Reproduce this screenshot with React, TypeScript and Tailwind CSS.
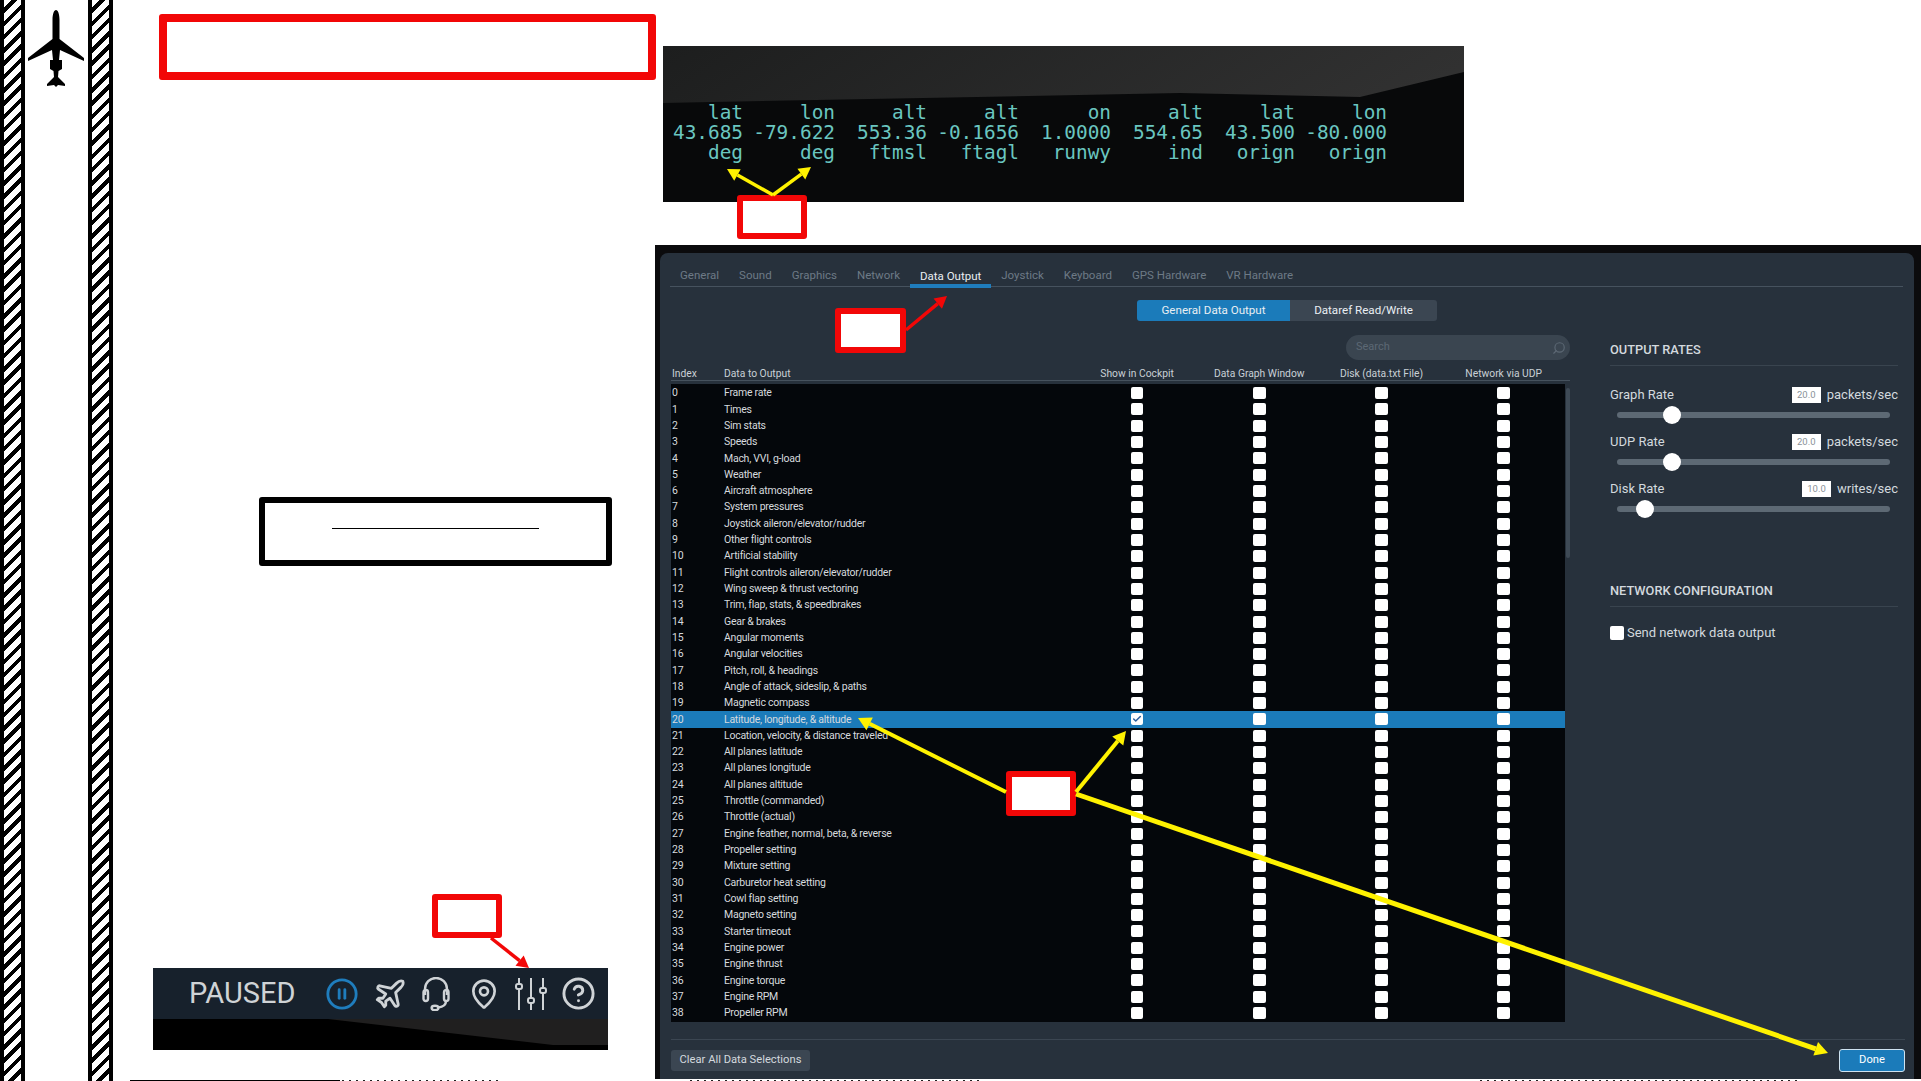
import React from "react";
import { Check, CircleHelp, CirclePause, MapPin, Plane, Search } from "lucide-react";

const DATA_ROWS = [
  "Frame rate",
  "Times",
  "Sim stats",
  "Speeds",
  "Mach, VVI, g-load",
  "Weather",
  "Aircraft atmosphere",
  "System pressures",
  "Joystick aileron/elevator/rudder",
  "Other flight controls",
  "Artificial stability",
  "Flight controls aileron/elevator/rudder",
  "Wing sweep & thrust vectoring",
  "Trim, flap, stats, & speedbrakes",
  "Gear & brakes",
  "Angular moments",
  "Angular velocities",
  "Pitch, roll, & headings",
  "Angle of attack, sideslip, & paths",
  "Magnetic compass",
  "Latitude, longitude, & altitude",
  "Location, velocity, & distance traveled",
  "All planes latitude",
  "All planes longitude",
  "All planes altitude",
  "Throttle (commanded)",
  "Throttle (actual)",
  "Engine feather, normal, beta, & reverse",
  "Propeller setting",
  "Mixture setting",
  "Carburetor heat setting",
  "Cowl flap setting",
  "Magneto setting",
  "Starter timeout",
  "Engine power",
  "Engine thrust",
  "Engine torque",
  "Engine RPM",
  "Propeller RPM",
];

const TABS = ["General", "Sound", "Graphics", "Network", "Data Output", "Joystick", "Keyboard", "GPS Hardware", "VR Hardware"];

const READOUT = [
  ["lat", "lon", "alt", "alt", "on", "alt", "lat", "lon"],
  ["43.685", "-79.622", "553.36", "-0.1656", "1.0000", "554.65", "43.500", "-80.000"],
  ["deg", "deg", "ftmsl", "ftagl", "runwy", "ind", "orign", "orign"],
];

const RATES = [
  { label: "Graph Rate", value: "20.0", unit: "packets/sec", thumb: 55 },
  { label: "UDP Rate", value: "20.0", unit: "packets/sec", thumb: 55 },
  { label: "Disk Rate", value: "10.0", unit: "writes/sec", thumb: 27.5 },
];

const YELLOW = "#fff200";
const RED = "#f20707";

const ROW_GRID = "grid grid-cols-[53px_352px_122.2px_122.2px_122.2px_122.2px] items-center";

// line with a filled head, coordinates are page pixels
function Arrow({ x1, y1, x2, y2, color, width = 4, head = 13 }: { x1: number; y1: number; x2: number; y2: number; color: string; width?: number; head?: number }) {
  const a = Math.atan2(y2 - y1, x2 - x1);
  const bx = x2 - Math.cos(a) * head;
  const by = y2 - Math.sin(a) * head;
  const nx = -Math.sin(a) * head * 0.55;
  const ny = Math.cos(a) * head * 0.55;
  return (
    <g>
      <line x1={x1} y1={y1} x2={bx} y2={by} stroke={color} strokeWidth={width} />
      <polygon points={`${x2},${y2} ${bx + nx},${by + ny} ${bx - nx},${by - ny}`} fill={color} />
    </g>
  );
}

function HatchStrip({ className }: { className: string }) {
  return (
    <div
      className={`absolute top-0 h-[1081px] w-[25px] border-x-[4px] border-black bg-[repeating-linear-gradient(135deg,#fff_0px,#fff_5.5px,#000_5.5px,#000_9.4px)] ${className}`}
    />
  );
}

function Box({ className }: { className: string }) {
  return <div className={`absolute rounded-[3px] bg-white ${className}`} />;
}

function Tick({ checked }: { checked?: boolean }) {
  return (
    <div className="mx-auto flex h-[12px] w-[12.5px] items-center justify-center rounded-[2px] bg-white">
      {checked && <Check size={10} strokeWidth={3.5} className="text-[#2b5f9e]" />}
    </div>
  );
}

function SlidersIcon() {
  return (
    <svg width="32" height="34" viewBox="0 0 32 34" fill="none" stroke="#cfd3d6" strokeWidth="2">
      <path d="M4 1v32M16 1v32M28 1v32" />
      <rect x="1" y="7" width="6" height="5" rx="2" fill="#17212c" />
      <rect x="13" y="21" width="6" height="5" rx="2" fill="#17212c" />
      <rect x="25" y="11" width="6" height="5" rx="2" fill="#17212c" />
    </svg>
  );
}

function HeadsetIcon() {
  return (
    <svg width="28" height="34" viewBox="0 0 28 34" fill="none" stroke="#cfd3d6" strokeWidth="2.4">
      <path d="M3 18v-6a11 11 0 0 1 22 0v6" />
      <rect x="1.5" y="13" width="4.5" height="11" rx="2.2" />
      <rect x="22" y="13" width="4.5" height="11" rx="2.2" />
      <path d="M24 24c0 4-3 6-8 6.5" />
      <ellipse cx="13" cy="31" rx="3.4" ry="2.2" />
    </svg>
  );
}

function PausedBar() {
  return (
    <div className="absolute left-[153px] top-[968px] h-[82px] w-[455px] bg-black">
      <div className="flex h-[51px] items-center bg-[#17212c] pl-[36px] text-[#cfd3d6]">
        <span className="w-[136px] font-['Roboto',sans-serif] text-[29px]">PAUSED</span>
        <CirclePause size={34} strokeWidth={2} className="mr-[14px] text-[#1f7dbd]" />
        <Plane size={34} strokeWidth={2} className="mr-[15px]" />
        <div className="mr-[18px]"><HeadsetIcon /></div>
        <MapPin size={32} strokeWidth={2} className="mr-[14.5px]" />
        <div className="mr-[14px]"><SlidersIcon /></div>
        <CircleHelp size={35} strokeWidth={2} />
      </div>
      <svg className="block h-[31px] w-full" viewBox="0 0 455 31" preserveAspectRatio="none">
        <polygon points="175,0 455,0 455,26 400,26" fill="#201f1f" />
      </svg>
    </div>
  );
}

function SimReadout() {
  return (
    <div className="absolute left-[663px] top-[46px] h-[156px] w-[801px] overflow-hidden bg-[#262626]">
      <svg className="absolute inset-0 h-full w-full" viewBox="0 0 801 156">
        <defs>
          <linearGradient id="sky" x1="0" y1="0" x2="1" y2="0.3">
            <stop offset="0" stopColor="#1d1e1e" />
            <stop offset="1" stopColor="#323232" />
          </linearGradient>
        </defs>
        <rect width="801" height="156" fill="url(#sky)" />
        <polygon points="0,57 517,47 697,51 801,26 801,156 0,156" fill="#08090a" />
      </svg>
      <div className="relative grid grid-cols-[80px_repeat(7,92px)] pt-[57px] font-['DejaVu_Sans_Mono',monospace] text-[19.4px] leading-[20px] text-[#6ac6c0]">
        {READOUT.flat().map((cell, i) => (
          <span key={i} className="whitespace-nowrap text-right">
            {cell}
          </span>
        ))}
      </div>
    </div>
  );
}

function DataOutputDialog() {
  return (
    <div className="absolute left-[655px] top-[245px] h-[834px] w-[1266px] bg-[#0b0b0d] pl-[5px] pr-[7px] pt-[8px] font-['Roboto',sans-serif]">
      <div className="flex h-full flex-col rounded-t-lg bg-[#27313c]">
        {/* Tabs */}
        <div className="ml-[10px] mr-[11px] flex h-[34px] items-end border-b border-[#46525e] text-[11.5px] text-[#6d7a86]">
          {TABS.map((tab) => (
            <div
              key={tab}
              className={
                tab === "Data Output"
                  ? "mb-[-2px] flex h-[30px] items-center border-b-[4px] border-[#1f7dbd] px-[10px] pt-[12px] text-[#e9eef2]"
                  : "flex h-[30px] items-center px-[10px] pt-[10px]"
              }
            >
              {tab}
            </div>
          ))}
        </div>

        {/* General / dataref switch */}
        <div className="mt-[13px] flex justify-center text-[11.6px] text-[#e9eef2]">
          <div className="flex h-[21px] w-[153px] items-center justify-center rounded-l-[3px] bg-[#1b7bba]">General Data Output</div>
          <div className="flex h-[21px] w-[147px] items-center justify-center rounded-r-[3px] bg-[#3b4652]">Dataref Read/Write</div>
        </div>

        <div className="flex flex-1 pl-[11px] pt-[13px]">
          {/* Data table */}
          <div className="w-[899px]">
            <div className="mt-px flex h-[25px] justify-end">
              <div className="flex w-[224px] items-center justify-between rounded-full bg-[#3a4550] pl-[10px] pr-[4px] text-[11px] text-[#5c6874]">
                <span>Search</span>
                <Search size={14} className="-scale-x-100" />
              </div>
            </div>
            <div className={`${ROW_GRID} h-[21px] w-[899px] border-b border-[#46525e] pt-[6px] text-[10.3px] text-[#c9d0d6]`}>
              <span className="pl-[1px]">Index</span>
              <span>Data to Output</span>
              <span className="text-center">Show in Cockpit</span>
              <span className="text-center">Data Graph Window</span>
              <span className="text-center">Disk (data.txt File)</span>
              <span className="text-center">Network via UDP</span>
            </div>
            <div className="mt-[3px] flex h-[638px]">
              <div className="w-[894px] bg-[#04070b] pt-px text-[10.5px] tracking-[-0.25px] text-[#d6dade]">
                {DATA_ROWS.map((name, i) => (
                  <div key={name} className={`${ROW_GRID} h-[16.32px] ${i === 20 ? "bg-[#1b7bba]" : ""}`}>
                    <span className="pl-[1px]">{i}</span>
                    <span className="whitespace-nowrap">{name}</span>
                    <Tick checked={i === 20} />
                    <Tick />
                    <Tick />
                    <Tick />
                  </div>
                ))}
              </div>
              <div className="ml-px mt-[4px] h-[170px] w-[4px] rounded-full bg-[#3e4a56]" />
            </div>
          </div>

          {/* Right hand settings */}
          <div className="ml-[40px] w-[288px] text-[#d3d9de]">
            <div className="flex h-[32px] items-center border-b border-[#39444f] text-[12.8px] font-medium">OUTPUT RATES</div>
            <div className="mt-[21px] flex flex-col gap-[10px]">
              {RATES.map((rate) => (
                <div key={rate.label}>
                  <div className="flex h-[16px] items-center text-[13px]">
                    <span className="flex-1">{rate.label}</span>
                    <span className="mr-[6px] flex h-[16px] w-[29px] items-center justify-center bg-white text-[9.5px] text-[#8a9299]">{rate.value}</span>
                    <span>{rate.unit}</span>
                  </div>
                  <div className="mx-[7px] mt-[3px] flex h-[18px] items-center">
                    <div className="relative h-[6px] w-[273px] rounded-full bg-[#5d6974]">
                      <div
                        className="absolute top-[-6px] h-[18px] w-[18px] -translate-x-1/2 rounded-full bg-white"
                        style={{ left: rate.thumb }}
                      />
                    </div>
                  </div>
                </div>
              ))}
            </div>
            <div className="mt-[57px] flex h-[32px] items-center border-b border-[#39444f] text-[12.8px] font-medium">NETWORK CONFIGURATION</div>
            <div className="mt-[16px] flex items-center gap-[3px] text-[13px]">
              <div className="h-[14px] w-[14px] rounded-[2px] bg-white" />
              <span>Send network data output</span>
            </div>
          </div>
        </div>

        {/* Footer */}
        <div className="ml-[11px] mr-[9px] flex h-[40px] items-start justify-between border-t border-[#3b4652] pt-[10px] text-[11.2px] text-[#d3d9de]">
          <div className="flex h-[21px] w-[139px] items-center justify-center rounded-[3px] bg-[#3b4652]">Clear All Data Selections</div>
          <div className="-mt-px flex h-[23px] w-[66px] items-center justify-center rounded-[3px] border border-[#cfe3f1] bg-[#1b7bba] text-white">Done</div>
        </div>
      </div>
    </div>
  );
}

export default function App() {
  return (
    <div className="relative h-[1081px] w-[1921px] overflow-hidden bg-white">
      <HatchStrip className="left-0" />
      <HatchStrip className="left-[88px]" />

      {/* plane logo */}
      <svg className="absolute left-0 top-0" width="113" height="100" viewBox="0 0 113 100">
        <path d="M56 10C58 10 59.5 14 59.5 20L59.5 39L84 58L84 61L60 50L59 60L62 60L62 69L58.5 71L58 77L65 84L65 86L58 85L56 87L54 85L47 86L47 84L54 77L53.5 71L50 69L50 60L53 60L52 50L28 61L28 58L52.5 39L52.5 20C52.5 14 54 10 56 10Z" fill="#000" />
      </svg>

      <Box className="left-[159px] top-[14px] h-[66px] w-[497px] border-[8px] border-[#f20707]" />
      <SimReadout />
      <Box className="left-[259px] top-[497px] h-[69px] w-[353px] border-[6px] border-black" />
      <div className="absolute left-[332px] top-[528px] h-px w-[207px] bg-black" />
      <PausedBar />
      <DataOutputDialog />

      {/* callouts over the screenshots */}
      <Box className="left-[737px] top-[195px] h-[44px] w-[70px] border-[6px] border-[#f20707]" />
      <Box className="left-[432px] top-[894px] h-[44px] w-[70px] border-[6px] border-[#f20707]" />
      <Box className="left-[835px] top-[308px] h-[45px] w-[71px] border-[6px] border-[#f20707]" />
      <Box className="left-[1006px] top-[771px] h-[45px] w-[70px] border-[6px] border-[#f20707]" />

      <svg className="pointer-events-none absolute left-0 top-0" width="1921" height="1081" viewBox="0 0 1921 1081">
        <Arrow x1={773} y1={195} x2={727} y2={169} color={YELLOW} width={3.5} head={12} />
        <Arrow x1={773} y1={195} x2={811} y2={167} color={YELLOW} width={3.5} head={12} />
        <Arrow x1={491} y1={938} x2={529} y2={968} color={RED} width={3.5} head={12} />
        <Arrow x1={906} y1={330} x2={947} y2={296} color={RED} width={3.5} head={12} />
        <Arrow x1={1006} y1={792} x2={858} y2={718} color={YELLOW} />
        <Arrow x1={1076} y1={792} x2={1126} y2={731} color={YELLOW} />
        <Arrow x1={1076} y1={794} x2={1828} y2={1053} color={YELLOW} width={5} />
        {/* cut off line of text along the bottom edge */}
        <path d="M130 1080.5H340" stroke="#000" strokeWidth="1" />
        <path d="M342 1080.5H500M690 1080.5H980M1480 1080.5H1800" stroke="#222" strokeWidth="1" strokeDasharray="2 5" />
      </svg>
    </div>
  );
}
